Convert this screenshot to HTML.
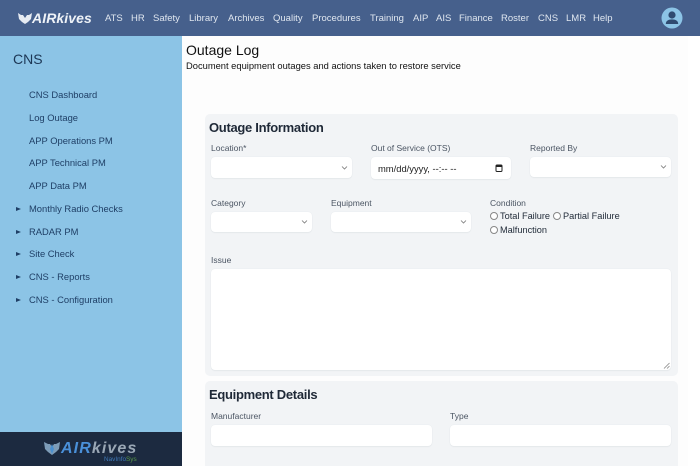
<!DOCTYPE html>
<html>
<head>
<meta charset="utf-8">
<style>
*{box-sizing:border-box}
html,body{margin:0;padding:0;width:700px;height:466px;overflow:hidden;background:#fff;font-family:"Liberation Sans",sans-serif}
#wrap{position:absolute;left:0;top:0;width:700px;height:466px;filter:blur(.3px);overflow:hidden}
.a{position:absolute;white-space:nowrap}
#top{position:absolute;left:0;top:0;width:700px;height:36px;background:#46608c}
.nav{position:absolute;top:12px;font-size:9.5px;line-height:13px;color:#dfe6ef;white-space:nowrap}
#side{position:absolute;left:0;top:36px;width:182px;height:430px;background:#8cc4e6}
#sfoot{position:absolute;left:0;top:432px;width:182px;height:34px;background:#1c2a40}
.si{position:absolute;left:29px;margin-top:-1.5px;font-size:9.4px;line-height:13px;color:#1f3f66;white-space:nowrap}
.ar{position:absolute;left:16px;width:0;height:0;border-left:5px solid #1f3f66;border-top:2.5px solid transparent;border-bottom:2.5px solid transparent}
.card{position:absolute;background:#f2f4f6;border-radius:5px}
.lb{position:absolute;margin-top:-.5px;font-size:8.5px;line-height:11px;color:#4b5563;white-space:nowrap}
.in{position:absolute;background:#fff;border-radius:4px;box-shadow:0 0 1px #dde1e6,0 1px 1px #e6e9ec}
.ch{position:absolute;right:4px;top:50%;margin-top:-3px}
.rd{position:absolute;width:8px;height:8px;border:.7px solid #888;border-radius:50%;background:#fff}
.rt{position:absolute;font-size:9.2px;line-height:12px;color:#1f2937;white-space:nowrap}
</style>
</head>
<body>
<div id="wrap">
<div class="a" style="left:182px;top:36px;width:506px;height:430px;background:#fdfdfd"></div>
<div id="top"></div>
<svg class="a" style="left:17px;top:12px" width="16" height="13" viewBox="0 0 16 13"><path d="M1 1l3 2 2 0 2 3 2-3 2 0 3-2-1 6-3 3-3 2-3-2-3-3z" fill="#e6ebf2"/></svg>
<div class="a" style="left:32px;top:9.5px;font-size:14px;line-height:17px;font-weight:bold;font-style:italic;color:#eef2f7;letter-spacing:.1px">AIRkives</div>
<div class="nav" style="left:105px">ATS</div>
<div class="nav" style="left:131px">HR</div>
<div class="nav" style="left:153px">Safety</div>
<div class="nav" style="left:189px">Library</div>
<div class="nav" style="left:228px">Archives</div>
<div class="nav" style="left:273px">Quality</div>
<div class="nav" style="left:312px">Procedures</div>
<div class="nav" style="left:370px">Training</div>
<div class="nav" style="left:413px">AIP</div>
<div class="nav" style="left:436px">AIS</div>
<div class="nav" style="left:459px">Finance</div>
<div class="nav" style="left:501px">Roster</div>
<div class="nav" style="left:538px">CNS</div>
<div class="nav" style="left:566px">LMR</div>
<div class="nav" style="left:593px">Help</div>
<svg class="a" style="left:661px;top:7px" width="22" height="22" viewBox="0 0 22 22"><circle cx="11" cy="11" r="10.5" fill="#8cc4e6"/><circle cx="11" cy="8" r="3.6" fill="#2f4a70"/><path d="M4.8 17c0-3.2 2.6-4.6 6.2-4.6s6.2 1.4 6.2 4.6z" fill="#2f4a70"/></svg>

<div id="side"></div>
<div class="a" style="left:13px;top:51px;font-size:14px;line-height:17px;color:#1c3654">CNS</div>
<div class="si" style="top:89px">CNS Dashboard</div>
<div class="si" style="top:112px">Log Outage</div>
<div class="si" style="top:135px">APP Operations PM</div>
<div class="si" style="top:157px">APP Technical PM</div>
<div class="si" style="top:180px">APP Data PM</div>
<div class="ar" style="top:207px"></div><div class="si" style="top:203px">Monthly Radio Checks</div>
<div class="ar" style="top:230px"></div><div class="si" style="top:226px">RADAR PM</div>
<div class="ar" style="top:252px"></div><div class="si" style="top:248px">Site Check</div>
<div class="ar" style="top:275px"></div><div class="si" style="top:271px">CNS - Reports</div>
<div class="ar" style="top:298px"></div><div class="si" style="top:294px">CNS - Configuration</div>
<div id="sfoot"></div>
<svg class="a" style="left:43px;top:440px" width="18" height="16" viewBox="0 0 18 16"><path d="M1 2l4 2 2 0 2 3 2-3 2 0 4-2-1 7-3 3-4 3-4-3-3-3z" fill="#7d9cb8"/><path d="M9 4l2 5-2 5-2-5z" fill="#4a90d0"/></svg>
<div class="a" style="left:61px;top:440px;font-size:16px;line-height:18px;font-weight:bold;font-style:italic;color:#4a90d9;letter-spacing:1.1px">AIR<span style="color:#9aa7b5">kives</span></div>
<div class="a" style="left:104px;top:456px;font-size:6.4px;line-height:7px;color:#3f79b8">NavInfo<span style="color:#5a9a4a">Sys</span></div>

<div class="a" style="left:186px;top:41px;font-size:14px;line-height:18px;color:#111">Outage Log</div>
<div class="a" style="left:186px;top:60px;font-size:9.36px;line-height:13px;color:#111">Document equipment outages and actions taken to restore service</div>

<div class="card" style="left:205px;top:114px;width:473px;height:262px"></div>
<div class="a" style="left:209px;top:120px;font-size:13px;line-height:16px;font-weight:bold;color:#1f2937;letter-spacing:-.3px">Outage Information</div>
<div class="lb" style="left:211px;top:143px">Location*</div>
<div class="in" style="left:211px;top:157px;width:141px;height:21px"><svg class="ch" width="7" height="6" viewBox="0 0 7 6"><path d="M1 1.5l2.5 2.5L6 1.5" fill="none" stroke="#777" stroke-width=".8"/></svg></div>
<div class="lb" style="left:371px;top:143px">Out of Service (OTS)</div>
<div class="in" style="left:371px;top:157px;width:140px;height:22px"><div class="a" style="left:7px;top:6px;font-size:9.4px;line-height:12px;color:#222">mm/dd/yyyy, --:-- --</div><svg class="a" style="left:124px;top:6px" width="8" height="10" viewBox="0 0 8 10"><rect x="1" y="2" width="6" height="6.5" rx="1" fill="none" stroke="#222" stroke-width="1"/><rect x="1" y="2" width="6" height="2" fill="#222"/></svg></div>
<div class="lb" style="left:530px;top:143px">Reported By</div>
<div class="in" style="left:530px;top:157px;width:141px;height:20px"><svg class="ch" width="7" height="6" viewBox="0 0 7 6"><path d="M1 1.5l2.5 2.5L6 1.5" fill="none" stroke="#777" stroke-width=".8"/></svg></div>

<div class="lb" style="left:211px;top:198px">Category</div>
<div class="in" style="left:211px;top:212px;width:101px;height:20px"><svg class="ch" width="7" height="6" viewBox="0 0 7 6"><path d="M1 1.5l2.5 2.5L6 1.5" fill="none" stroke="#777" stroke-width=".8"/></svg></div>
<div class="lb" style="left:331px;top:198px">Equipment</div>
<div class="in" style="left:331px;top:212px;width:140px;height:20px"><svg class="ch" width="7" height="6" viewBox="0 0 7 6"><path d="M1 1.5l2.5 2.5L6 1.5" fill="none" stroke="#777" stroke-width=".8"/></svg></div>
<div class="lb" style="left:490px;top:198px">Condition</div>
<div class="rd" style="left:490px;top:212px"></div><div class="rt" style="left:500px;top:210px">Total Failure</div>
<div class="rd" style="left:553px;top:212px"></div><div class="rt" style="left:563px;top:210px">Partial Failure</div>
<div class="rd" style="left:490px;top:226px"></div><div class="rt" style="left:500px;top:224px">Malfunction</div>

<div class="lb" style="left:211px;top:255px">Issue</div>
<div class="in" style="left:211px;top:269px;width:460px;height:101px"><svg class="a" style="right:1px;bottom:1px" width="7" height="7" viewBox="0 0 7 7"><path d="M1 6.5L6.5 1M4 6.5L6.5 4" stroke="#888" stroke-width=".8"/></svg></div>

<div class="card" style="left:205px;top:381px;width:473px;height:85px;border-radius:5px 5px 0 0"></div>
<div class="a" style="left:209px;top:387px;font-size:13px;line-height:16px;font-weight:bold;color:#1f2937;letter-spacing:-.3px">Equipment Details</div>
<div class="lb" style="left:211px;top:411px">Manufacturer</div>
<div class="in" style="left:211px;top:425px;width:221px;height:21px"></div>
<div class="lb" style="left:450px;top:411px">Type</div>
<div class="in" style="left:450px;top:425px;width:221px;height:21px"></div>
</div>
</body>
</html>
